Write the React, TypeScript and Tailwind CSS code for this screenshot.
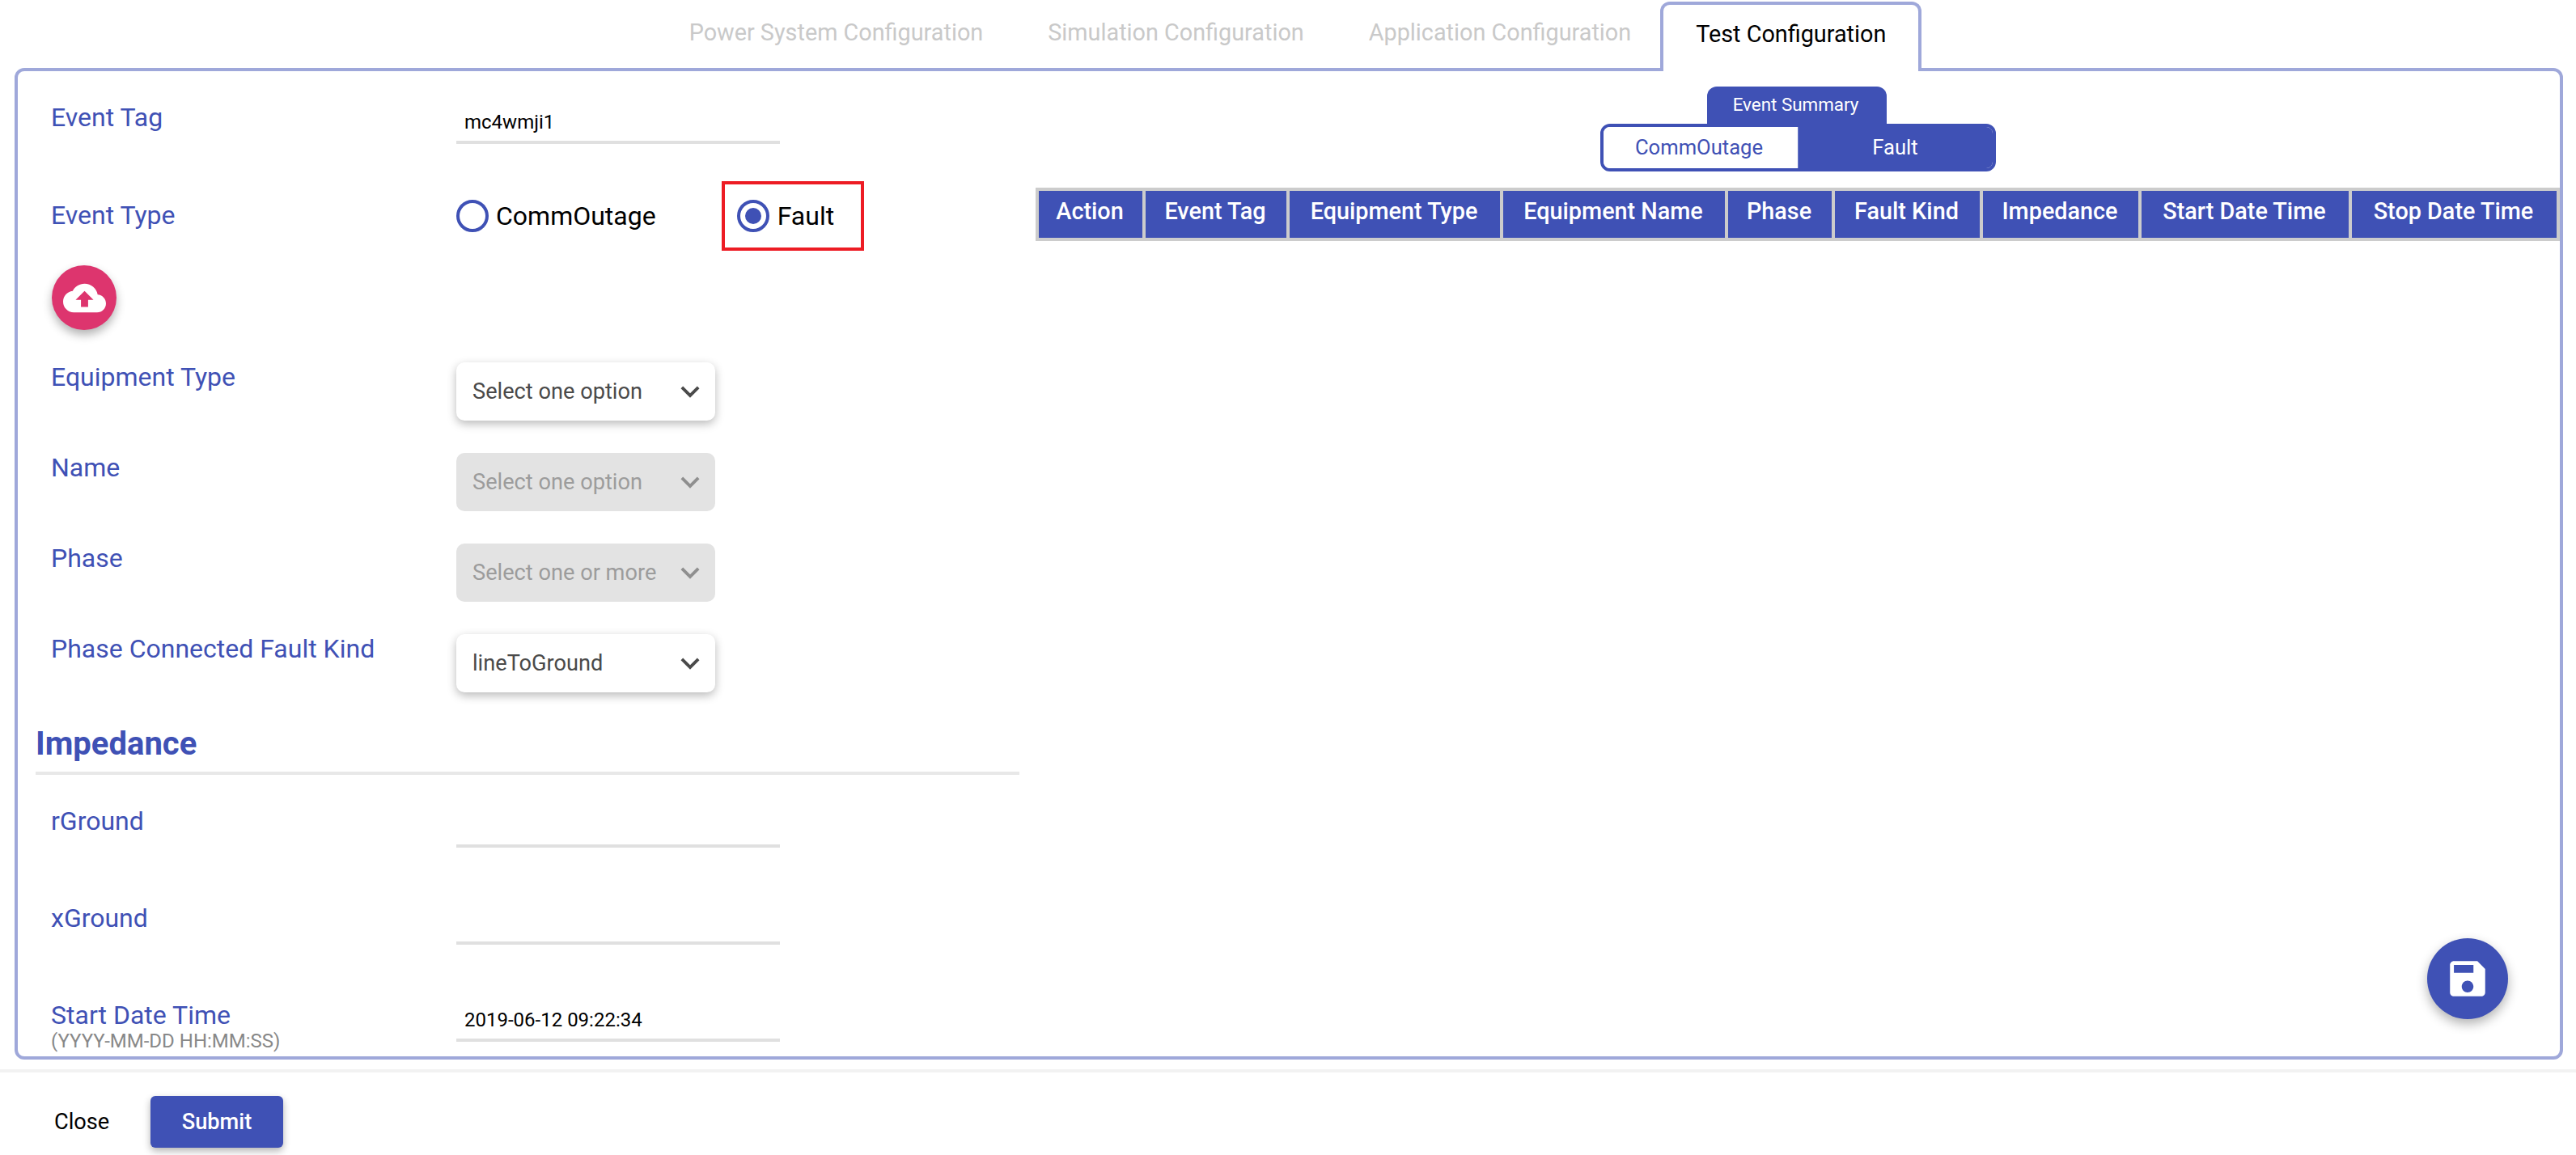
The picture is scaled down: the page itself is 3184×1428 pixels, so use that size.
import type { ReactNode } from "react";

const columns = [
    { name: "Action", w: "w-[132px]" },
    { name: "Event Tag", w: "w-[178px]" },
    { name: "Equipment Type", w: "w-[264px]" },
    { name: "Equipment Name", w: "w-[278px]" },
    { name: "Phase", w: "w-[132px]" },
    { name: "Fault Kind", w: "w-[183px]" },
    { name: "Impedance", w: "w-[196px]" },
    { name: "Start Date Time", w: "w-[260px]" },
    { name: "Stop Date Time", w: "w-[257px]" },
];

const Chevron = ({ className }: { className: string }) => (
    <svg viewBox="0 0 24 24" className={`w-[46px] h-[46px] -mr-[12px] ${className}`} fill="currentColor">
        <path d="M7.41 8.59L12 13.17l4.59-4.58L18 10l-6 6-6-6 1.41-1.41z" />
    </svg>
);

const Label = ({ children }: { children: ReactNode }) => (
    <div className="w-[501px] -mt-[2px] text-[32px] leading-[40px] text-[#3f51b5]">{children}</div>
);

const Select = ({ text, disabled }: { text: string; disabled?: boolean }) => (
    <div
        className={`w-[320px] h-[72px] rounded-[10px] pl-[20px] pr-[20px] flex items-center justify-between text-[27.2px] ${
            disabled ? "bg-[#e3e3e3] text-[#9c9c9c]" : "bg-white text-[#4a4a4a] shadow-[0_4px_12px_rgba(0,0,0,0.28)]"
        }`}>
        <span>{text}</span>
        <Chevron className={disabled ? "text-[#8f8f8f]" : "text-[#4a4a4a]"} />
    </div>
);

const SelectRow = ({ label, text, disabled }: { label: string; text: string; disabled?: boolean }) => (
    <div className="flex items-start pl-[41px] mt-[40px]">
        <Label>{label}</Label>
        <Select text={text} disabled={disabled} />
    </div>
);

const InputRow = ({ label, value, hint, className }: { label: string; value?: string; hint?: string; className: string }) => (
    <div className={`flex items-start pl-[41px] ${className}`}>
        <div className="w-[501px]">
            <Label>{label}</Label>
            {hint && <div className="text-[24px] leading-[26px] -mt-[1px] text-[#888888]">{hint}</div>}
        </div>
        <div className="w-[400px] h-[51px] border-b-4 border-[#e0e0e0] pl-[10px] pt-[8px] text-[24px] leading-[32px] text-black">
            {value}
        </div>
    </div>
);

const Radio = ({ checked }: { checked?: boolean }) => (
    <span className="w-[40px] h-[40px] rounded-full border-4 border-[#3f51b5] flex items-center justify-center shrink-0">
        {checked && <span className="w-[20px] h-[20px] rounded-full bg-[#3f51b5]" />}
    </span>
);

const EventForm = () => (
    <div className="w-[1258px] shrink-0 pt-[39px]">
        <InputRow label="Event Tag" value="mc4wmji1" className="" />
        <div className="flex items-center pl-[41px] h-[86px] mt-[46px]">
            <Label>Event Type</Label>
            <div className="flex items-center gap-[9px] text-[32px] text-black">
                <Radio />
                <span>CommOutage</span>
            </div>
            <div className="ml-[81px] w-[176px] h-[86px] border-4 border-[#ed1c24] pl-[15px] flex items-center gap-[10px] text-[32px] text-black">
                <Radio checked />
                <span>Fault</span>
            </div>
        </div>
        <button className="ml-[42px] mt-[18px] w-[80px] h-[80px] rounded-full bg-[#dd356e] flex items-center justify-center shadow-[0_6px_12px_rgba(0,0,0,0.3)]">
            <svg viewBox="0 0 24 24" className="w-[53px] h-[53px]" fill="white">
                <path d="M19.35 10.04C18.67 6.59 15.64 4 12 4 9.11 4 6.6 5.64 5.35 8.04 2.34 8.36 0 10.91 0 14c0 3.31 2.69 6 6 6h13c2.76 0 5-2.24 5-5 0-2.64-2.05-4.78-4.65-4.96zM14 13v4h-4v-4H7l5-5 5 5h-3z" />
            </svg>
        </button>
        <SelectRow label="Equipment Type" text="Select one option" />
        <SelectRow label="Name" text="Select one option" disabled />
        <SelectRow label="Phase" text="Select one or more" disabled />
        <SelectRow label="Phase Connected Fault Kind" text="lineToGround" />
        <div className="ml-[22px] w-[1216px] mt-[40px] pb-[10px] border-b-4 border-[#e8e8e8] text-[40px] leading-[48px] font-bold text-[#3f51b5]">
            Impedance
        </div>
        <InputRow label="rGround" className="mt-[39px]" />
        <InputRow label="xGround" className="mt-[69px]" />
        <InputRow label="Start Date Time" value="2019-06-12 09:22:34" hint="(YYYY-MM-DD HH:MM:SS)" className="mt-[69px]" />
    </div>
);

const EventSummary = () => (
    <div className="flex-1 pt-[19px] flex flex-col">
        <div className="flex flex-col items-center">
            <div className="w-[222px] h-[46px] -ml-[2px] pr-[3px] rounded-t-[12px] bg-[#3f51b5] text-white text-[22.4px] flex items-center justify-center">
                Event Summary
            </div>
            <div className="w-[489px] h-[59px] rounded-[12px] border-4 border-[#3f51b5] flex overflow-hidden text-[25.6px]">
                <div className="w-[240px] pr-[3px] bg-white text-[#3f51b5] flex items-center justify-center">CommOutage</div>
                <div className="flex-1 bg-[#3f51b5] border-l border-[#6f7cc9] text-white flex items-center justify-center">Fault</div>
            </div>
        </div>
        <table className="mt-[20px] w-[1884px] table-fixed border-collapse">
            <thead>
                <tr>
                    {columns.map((c) => (
                        <th
                            key={c.name}
                            className={`${c.w} h-[62px] p-0 pb-[6px] pr-[2px] border-4 border-[#cccccc] bg-[#3f51b5] text-white text-[28.8px] font-medium text-center`}>
                            {c.name}
                        </th>
                    ))}
                </tr>
            </thead>
        </table>
    </div>
);

const App = () => {
    return (
        <div className="w-[3184px] h-[1428px] bg-white overflow-hidden flex flex-col font-[family-name:Roboto,sans-serif]">
            <div className="h-[84px] pl-[3px] flex justify-center items-start text-[28.8px]">
                <div className="h-[86px] mt-[2px] pb-[8px] px-[40px] flex items-center text-[#c9c9c9]">Power System Configuration</div>
                <div className="h-[86px] mt-[2px] pb-[8px] px-[40px] flex items-center text-[#c9c9c9]">Simulation Configuration</div>
                <div className="h-[86px] mt-[2px] pb-[8px] pl-[40px] pr-[36px] flex items-center text-[#c9c9c9]">Application Configuration</div>
                <div className="relative z-10 h-[86px] mt-[2px] pb-[8px] px-[40px] flex items-center text-black bg-white border-4 border-b-0 border-[#9fa8da] rounded-t-[12px]">
                    Test Configuration
                </div>
            </div>
            <div className="relative ml-[18px] w-[3150px] h-[1226px] border-4 border-[#9fa8da] rounded-[12px] overflow-hidden flex">
                <EventForm />
                <EventSummary />
                <button className="absolute right-[64px] bottom-[46px] w-[100px] h-[100px] rounded-full bg-[#3f51b5] flex items-center justify-center shadow-[0_6px_14px_rgba(0,0,0,0.3)]">
                    <svg viewBox="0 0 24 24" className="w-[58px] h-[58px]" fill="white">
                        <path d="M17 3H5c-1.11 0-2 .9-2 2v14c0 1.1.89 2 2 2h14c1.1 0 2-.9 2-2V7l-4-4zm-5 16c-1.66 0-3-1.34-3-3s1.34-3 3-3 3 1.34 3 3-1.34 3-3 3zm3-10H5V5h10v4z" />
                    </svg>
                </button>
            </div>
            <div className="mt-[12px] border-t-4 border-[#f2f2f2] pt-[29px] flex items-center text-[27.2px]">
                <span className="w-[186px] pl-[67px] text-black">Close</span>
                <button className="w-[164px] h-[64px] rounded-[6px] bg-[#3f51b5] text-white font-medium shadow-[0_4px_10px_rgba(0,0,0,0.3)]">
                    Submit
                </button>
            </div>
        </div>
    );
};

export default App;
